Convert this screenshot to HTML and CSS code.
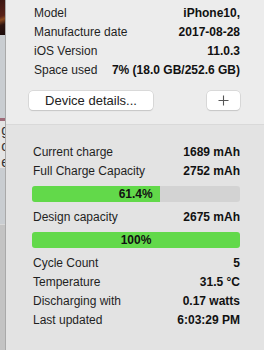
FILE: index.html
```html
<!DOCTYPE html>
<html lang="en">
    <head>
        <meta charset="UTF-8" />
        <title>Device info</title>
        <link rel="stylesheet" href="styles.css">
    </head>
    <body>
        <div class="behind">
            <div class="photo"></div>
            <div class="pane"></div>
            <div class="words">
                <span>g</span>
                <span>o</span>
                <span>e</span>
            </div>
            <div class="pane pane-low"></div>
            <div class="rest"></div>
        </div>

        <div class="panel">
            <div class="info">
                <div class="row"><span>Model</span><strong>iPhone10,</strong></div>
                <div class="row"><span>Manufacture date</span><strong>2017-08-28</strong></div>
                <div class="row"><span>iOS Version</span><strong>11.0.3</strong></div>
                <div class="row"><span>Space used</span><strong>7% (18.0 GB/252.6 GB)</strong></div>

                <div class="buttons">
                    <button class="btn btn-wide">Device details...</button>
                    <button class="btn btn-plus">
                        <svg width="11" height="11" viewBox="0 0 11 11">
                            <path d="M5.5 0.5V10.5M0.5 5.5H10.5" stroke="#555" stroke-width="1.1" fill="none"/>
                        </svg>
                    </button>
                </div>
            </div>

            <div class="battery">
                <div class="row"><span>Current charge</span><strong>1689 mAh</strong></div>
                <div class="row"><span>Full Charge Capacity</span><strong>2752 mAh</strong></div>
                <div class="bar bar-first">
                    <div class="fill" style="width: 61.4%;">61.4%</div>
                </div>
                <div class="row row-after"><span>Design capacity</span><strong>2675 mAh</strong></div>
                <div class="bar">
                    <div class="fill fill-center" style="width: 100%;">100%</div>
                </div>
                <div class="row row-after"><span>Cycle Count</span><strong>5</strong></div>
                <div class="row"><span>Temperature</span><strong>31.5 °C</strong></div>
                <div class="row"><span>Discharging with</span><strong>0.17 watts</strong></div>
                <div class="row"><span>Last updated</span><strong>6:03:29 PM</strong></div>
            </div>
        </div>
    </body>
</html>
```

FILE: styles.css
```css
body {
    margin: 0;
    height: 350px;
    display: flex;
    overflow: hidden;
    font-family: "Liberation Sans", Arial, sans-serif;
    font-size: 12px;
    color: #1f1f1f;
}

/* the window behind, only a sliver shows */
.behind {
    width: 5px;
    display: flex;
    flex-direction: column;
    background-color: #c2c2c2;
}
.photo {
    height: 35px;
    background: linear-gradient(160deg, #3c1712 0%, #5a2218 45%, #8a4a20 55%, #2e1410 70%, #1d0c0a 100%);
}
.pane {
    height: 83px;
    background-color: #c9cdd1;
    border-bottom: 3px solid #9e6a78;
}
.words {
    height: 47px;
    background-color: #e4e4e4;
    display: flex;
    flex-direction: column;
    align-items: flex-end;
    overflow: hidden;
    padding-top: 1px;
    box-sizing: border-box;
    font-size: 14px;
    line-height: 16px;
    color: #333;
}
.words span {
    margin-right: -4px;
}
.pane-low {
    height: 56px;
    border-bottom: 1px solid #d8d8d8;
}
.rest {
    flex: 1;
    background-color: #c3c3c3;
}

.panel {
    flex: 1;
    border-left: 1px solid #a9a9a9;
    display: flex;
    flex-direction: column;
}

.row {
    display: flex;
    justify-content: space-between;
    height: 19px;
    line-height: 19px;
}
.row strong {
    font-weight: bold;
    color: #111;
}

.info {
    background-color: #ececec;
    padding: 4px 24px 0 28px;
    height: 120px;
}

.buttons {
    display: flex;
    justify-content: space-between;
    margin: 11px 0 0 -5px;
}
.btn {
    height: 19px;
    background-color: #fff;
    border: none;
    border-radius: 4px;
    box-shadow: 0 0 0 0.5px #c6c6c6, 0 1px 1px #c9c9c9;
    font-family: "Liberation Sans", Arial, sans-serif;
    font-size: 13px;
    color: #222;
    padding: 0;
}
.btn-wide {
    width: 124px;
}
.btn-plus {
    width: 33px;
    display: flex;
    align-items: center;
    justify-content: center;
}

.battery {
    flex: 1;
    background-color: #e3e3e3;
    border-top: 1px solid #d9d9d9;
    padding: 18px 24px 0 27px;
}

.bar {
    height: 16px;
    background-color: #d3d3d3;
    border-radius: 3px;
    overflow: hidden;
    margin: 5px 0 0 -1px;
    font-weight: bold;
    color: #111;
    line-height: 16px;
}
.fill {
    height: 100%;
    background-color: #62d94a;
    text-align: right;
    padding-right: 7px;
    box-sizing: border-box;
}
.fill-center {
    text-align: center;
    padding-right: 0;
}
.row-after {
    margin-top: 6px;
}
```
